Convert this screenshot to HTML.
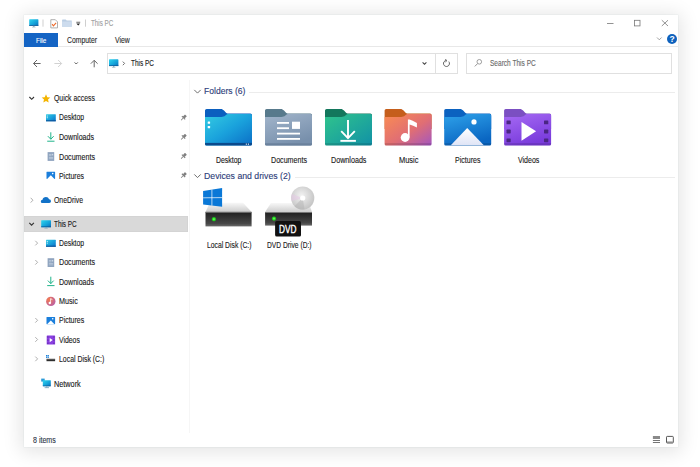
<!DOCTYPE html>
<html><head><meta charset="utf-8">
<style>
html,body{margin:0;padding:0;width:700px;height:467px;overflow:hidden;background:#fff;}
body{position:relative;font-family:"Liberation Sans",sans-serif;color:#1a1a1a;}
.win{position:absolute;left:24px;top:15px;width:654px;height:432px;background:#fff;
  box-shadow:0 2px 18px 3px rgba(0,0,0,0.11), 0 0 0 0.5px rgba(180,200,200,0.18);}
.a{position:absolute;}
.t{position:absolute;white-space:nowrap;line-height:1;transform-origin:0 0;-webkit-text-stroke:0.12px currentColor;}
</style></head><body>
<div class="win"></div>
<div class="a" style="left:24px;top:215.7px;width:164px;height:16.6px;background:#d9d9d9;box-shadow:inset 0 0 0 0.6px #d0d0d0"></div>

<svg class="a" style="left:0;top:0" width="700" height="467" viewBox="0 0 700 467">
<defs>
 <linearGradient id="gMon" x1="0" y1="0" x2="1" y2="1"><stop offset="0" stop-color="#2fd6ee"/><stop offset="0.6" stop-color="#13a0d8"/><stop offset="1" stop-color="#0a6cb8"/></linearGradient>
 <linearGradient id="gDesk" x1="0" y1="0" x2="1" y2="1"><stop offset="0" stop-color="#34cbe2"/><stop offset="0.5" stop-color="#1aa2dc"/><stop offset="1" stop-color="#0b6ec6"/></linearGradient>
 <linearGradient id="gDoc" x1="0" y1="0" x2="0.5" y2="1"><stop offset="0" stop-color="#a2b5cb"/><stop offset="1" stop-color="#7890ac"/></linearGradient>
 <linearGradient id="gDl" x1="0" y1="0" x2="1" y2="1"><stop offset="0" stop-color="#30c48c"/><stop offset="1" stop-color="#1191a6"/></linearGradient>
 <linearGradient id="gMus" x1="0" y1="0" x2="1" y2="1"><stop offset="0" stop-color="#fa8c52"/><stop offset="0.55" stop-color="#e06e74"/><stop offset="1" stop-color="#a356c0"/></linearGradient>
 <linearGradient id="gPic" x1="0" y1="0" x2="0.4" y2="1"><stop offset="0" stop-color="#2ea2ea"/><stop offset="1" stop-color="#0a66c2"/></linearGradient>
 <linearGradient id="gVid" x1="0" y1="0" x2="0.4" y2="1"><stop offset="0" stop-color="#a66af4"/><stop offset="1" stop-color="#7a3cdc"/></linearGradient>
 <linearGradient id="gMtn" x1="0" y1="0" x2="0" y2="1"><stop offset="0" stop-color="#ffffff"/><stop offset="1" stop-color="#dfe4f6"/></linearGradient>
 <linearGradient id="gTop" x1="0" y1="0" x2="0" y2="1"><stop offset="0" stop-color="#f7f7f7"/><stop offset="1" stop-color="#cdcdcd"/></linearGradient>
 <linearGradient id="gFront" x1="0" y1="0" x2="0" y2="1"><stop offset="0" stop-color="#1e1e1e"/><stop offset="0.8" stop-color="#474747"/><stop offset="1" stop-color="#6a6a6a"/></linearGradient>
 <radialGradient id="gDisc" cx="0.45" cy="0.4" r="0.6"><stop offset="0" stop-color="#f2f2f2"/><stop offset="1" stop-color="#c4c4c4"/></radialGradient>
 <radialGradient id="gMusC" cx="0.3" cy="0.3" r="0.8"><stop offset="0" stop-color="#f47a4e"/><stop offset="1" stop-color="#b860a8"/></radialGradient>
 <radialGradient id="gLed" cx="0.5" cy="0.5" r="0.5"><stop offset="0" stop-color="#7dff6a"/><stop offset="0.6" stop-color="#18d018"/><stop offset="1" stop-color="#18d018" stop-opacity="0"/></radialGradient>
 <path id="fBack" d="M0,1.6 Q0,0 1.6,0 L15.6,0 C17.2,0 18,0.5 19,1.6 L20.8,3.6 C21.6,4.4 22.2,4.6 23.4,4.6 L45.4,4.6 Q47,4.6 47,6.2 L47,20 L0,20 Z"/>
 <path id="fFront" d="M0,8 L16.4,8 C18.2,8 19.2,7.6 20.4,6.6 L21,6 C21.8,5.4 22.4,5.2 23.6,5.2 L45.4,5.2 Q47,5.2 47,6.8 L47,35 Q47,36.6 45.4,36.6 L1.6,36.6 Q0,36.6 0,35 Z"/>
 <clipPath id="cFront"><use href="#fFront"/></clipPath>
</defs>

<!-- ===== title bar ===== -->
<g transform="translate(29.2,19.2)">
 <rect x="0" y="0" width="9.2" height="6.6" rx="0.6" fill="url(#gMon)"/>
 <rect x="0" y="5.9" width="9.2" height="0.8" fill="#0a5c9c"/>
 <rect x="4" y="6.6" width="1.3" height="1.2" fill="#7f9fb2"/>
 <rect x="2.8" y="7.6" width="3.6" height="0.6" fill="#9ab3c2"/>
</g>
<rect x="42.6" y="19.5" width="0.8" height="7.2" fill="#c4c4c4"/>
<g transform="translate(50.3,19.2)">
 <path d="M0.5,0.5 L5,0.5 L7.2,2.7 L7.2,8.7 L0.5,8.7 Z" fill="#fff" stroke="#9a9a9a" stroke-width="0.8"/>
 <path d="M1.8,5 L3.1,6.6 L5.8,3.6" fill="none" stroke="#ee6a2a" stroke-width="1.1"/>
</g>
<g transform="translate(62.1,19.5)">
 <path d="M0,0.6 Q0,0 0.6,0 L3.6,0 L4.6,1 L9.6,1 L9.6,7.3 L0,7.3 Z" fill="#b9cde3"/>
 <rect x="0" y="2" width="9.6" height="5.3" fill="#cddcee"/>
</g>
<rect x="76.3" y="21.8" width="3.9" height="0.8" fill="#444"/>
<path d="M76.3,23.4 L80.2,23.4 L78.25,25.6 Z" fill="#222"/>
<rect x="85.2" y="19.5" width="0.8" height="7.2" fill="#c4c4c4"/>

<!-- window controls -->
<rect x="607" y="23" width="6.5" height="0.8" fill="#777"/>
<rect x="634.4" y="20.3" width="5.6" height="5.6" fill="none" stroke="#777" stroke-width="0.8"/>
<path d="M661.8,20.2 L668,26 M668,20.2 L661.8,26" stroke="#777" stroke-width="0.8"/>
<path d="M657,37.5 L659.3,39.8 L661.6,37.5" fill="none" stroke="#888" stroke-width="0.8"/>
<circle cx="672" cy="39" r="5" fill="#0f62bd"/>
<text x="672" y="42.2" font-family="Liberation Sans" font-weight="bold" font-size="8.5" fill="#fff" text-anchor="middle">?</text>

<!-- nav arrows -->
<path d="M33.5,63.5 L40.6,63.5 M37,60 L33.5,63.5 L37,67" fill="none" stroke="#666" stroke-width="1"/>
<path d="M54.4,63.5 L61.6,63.5 M58.1,60 L61.6,63.5 L58.1,67" fill="none" stroke="#d2d2d2" stroke-width="1"/>
<path d="M74.6,62.4 L76.2,64 L77.8,62.4" fill="none" stroke="#555" stroke-width="0.95"/>
<path d="M94.2,60.3 L94.2,67.3 M90.8,63.7 L94.2,60.3 L97.6,63.7" fill="none" stroke="#666" stroke-width="1"/>

<!-- address icons -->
<g transform="translate(109,59.3)">
 <rect x="0" y="0" width="9.4" height="6.8" rx="0.6" fill="url(#gMon)"/>
 <rect x="0" y="6" width="9.4" height="0.8" fill="#0a5c9c"/>
 <rect x="4.1" y="6.8" width="1.3" height="1.1" fill="#7f9fb2"/>
 <rect x="2.9" y="7.7" width="3.6" height="0.6" fill="#9ab3c2"/>
</g>
<path d="M122.8,61.6 L124.6,63.4 L122.8,65.2" fill="none" stroke="#666" stroke-width="0.95"/>
<path d="M422.6,62.4 L424.5,64.3 L426.4,62.4" fill="none" stroke="#444" stroke-width="1.1"/>
<path d="M448.8,61.6 A3,3 0 1 1 446.2,60.5" fill="none" stroke="#555" stroke-width="0.9"/>
<path d="M445.2,59.3 L447,60.6 L445.4,62" fill="none" stroke="#555" stroke-width="0.8"/>
<circle cx="479.3" cy="61.8" r="2.3" fill="none" stroke="#888" stroke-width="0.8"/>
<path d="M477.6,63.6 L474.8,66.4" stroke="#888" stroke-width="0.9"/>

<!-- ===== sidebar ===== -->
<path d="M29.4,97 L31.7,99.3 L34,97" fill="none" stroke="#333" stroke-width="1.15"/>
<path d="M46,94.3 L47.25,97.2 L50.3,97.4 L48,99.4 L48.7,102.5 L46,100.9 L43.3,102.5 L44,99.4 L41.7,97.4 L44.75,97.2 Z" fill="#f4b400"/>
<!-- desktop -->
<g transform="translate(46,114.3)"><rect width="9.8" height="7" rx="0.5" fill="url(#gDesk)"/><rect y="6" width="9.8" height="1" fill="#0b4f94"/><rect x="0.8" y="1.3" width="0.9" height="0.9" fill="#fff"/><rect x="0.8" y="3" width="0.9" height="0.9" fill="#fff"/></g>
<!-- downloads -->
<path d="M50.8,132.3 L50.8,139.3 M47.9,136.2 L50.8,139.2 L53.7,136.2" fill="none" stroke="#20b48a" stroke-width="1"/>
<rect x="47.2" y="140.7" width="7.3" height="1" fill="#20b48a"/>
<!-- documents -->
<g transform="translate(47.6,152.1)"><rect width="6.6" height="8.8" fill="#8fa4bf"/><rect x="1.3" y="2" width="2.5" height="0.6" fill="#c9d5e4"/><rect x="1.3" y="3.4" width="2.5" height="0.6" fill="#c9d5e4"/><rect x="4.2" y="1.8" width="1.4" height="1.5" fill="#c9d5e4"/><rect x="1.3" y="5" width="4.3" height="0.6" fill="#c9d5e4"/><rect x="1.3" y="6.4" width="4.3" height="0.6" fill="#c9d5e4"/></g>
<!-- pictures -->
<g transform="translate(46.5,171.7)"><rect width="8.6" height="7.3" rx="0.4" fill="#1b7fdc"/><path d="M0.6,7.3 L4.3,3.6 L8,7.3 Z" fill="#fff"/><circle cx="6.2" cy="1.9" r="0.8" fill="#fff"/></g>
<!-- pins -->
<g id="pin" fill="#808080" transform="translate(183.5,117.8) rotate(45)"><rect x="-1.3" y="-3.4" width="2.6" height="3.2" rx="0.3"/><rect x="-2.3" y="-0.6" width="4.6" height="1.1"/><rect x="-0.4" y="0.4" width="0.8" height="3"/></g>
<use href="#pin" y="19.3"/>
<use href="#pin" y="38.4"/>
<use href="#pin" y="57.6"/>
<!-- onedrive -->
<path d="M30.7,197.8 L32.9,200.2 L30.7,202.6" fill="none" stroke="#9a9a9a" stroke-width="0.8"/>
<path d="M42.3,202.9 Q40.8,202.9 40.8,201.4 Q40.8,199.9 42.5,199.8 Q43,197 46,197 Q48.3,197 49.1,199.3 Q51,199.4 51,201.2 Q51,202.9 49.3,202.9 Z" fill="#1272c8"/>
<!-- this pc -->
<path d="M29.3,222.9 L31.6,225.2 L33.9,222.9" fill="none" stroke="#333" stroke-width="1.15"/>
<g transform="translate(41.2,220.2)">
 <rect x="0" y="0" width="9.8" height="7" rx="0.5" fill="url(#gMon)"/>
 <rect x="0" y="6.2" width="9.8" height="0.8" fill="#0a5c9c"/>
 <rect x="4.3" y="7" width="1.3" height="1" fill="#7f9fb2"/>
 <rect x="3.1" y="7.8" width="3.6" height="0.6" fill="#9ab3c2"/>
</g>
<!-- sub chevrons -->
<g id="chev"><path d="M35.3,240.8 L37.6,243.1 L35.3,245.4" fill="none" stroke="#9a9a9a" stroke-width="0.8"/></g>
<use href="#chev" y="19.2"/>
<use href="#chev" y="77.2"/>
<use href="#chev" y="96.4"/>
<use href="#chev" y="115.8"/>
<!-- desktop sub -->
<g transform="translate(46,239.7)"><rect width="9.8" height="7" rx="0.5" fill="url(#gDesk)"/><rect y="6" width="9.8" height="1" fill="#0b4f94"/><rect x="0.8" y="1.3" width="0.9" height="0.9" fill="#fff"/><rect x="0.8" y="3" width="0.9" height="0.9" fill="#fff"/></g>
<g transform="translate(47.6,258.2)"><rect width="6.6" height="8.8" fill="#8fa4bf"/><rect x="1.3" y="2" width="2.5" height="0.6" fill="#c9d5e4"/><rect x="1.3" y="3.4" width="2.5" height="0.6" fill="#c9d5e4"/><rect x="4.2" y="1.8" width="1.4" height="1.5" fill="#c9d5e4"/><rect x="1.3" y="5" width="4.3" height="0.6" fill="#c9d5e4"/><rect x="1.3" y="6.4" width="4.3" height="0.6" fill="#c9d5e4"/></g>
<path d="M50.8,276.7 L50.8,283.7 M47.9,280.6 L50.8,283.6 L53.7,280.6" fill="none" stroke="#20b48a" stroke-width="1"/>
<rect x="47.2" y="285.1" width="7.3" height="1" fill="#20b48a"/>
<!-- music -->
<circle cx="50.8" cy="301.4" r="4.7" fill="url(#gMusC)"/>
<circle cx="49.8" cy="303" r="1.2" fill="#fff"/><path d="M50.6,303 L50.6,298.6 L52.4,299.6" fill="none" stroke="#fff" stroke-width="0.8"/>
<g transform="translate(46.5,316.9)"><rect width="8.6" height="7.3" rx="0.4" fill="#1b7fdc"/><path d="M0.6,7.3 L4.3,3.6 L8,7.3 Z" fill="#fff"/><circle cx="6.2" cy="1.9" r="0.8" fill="#fff"/></g>
<!-- videos -->
<g transform="translate(46.7,335.6)"><rect width="8.4" height="9" rx="0.4" fill="#8a3fe0"/><rect x="0.7" y="0.9" width="1" height="1" fill="#4d2590"/><rect x="0.7" y="4" width="1" height="1" fill="#4d2590"/><rect x="0.7" y="7.1" width="1" height="1" fill="#4d2590"/><rect x="6.7" y="0.9" width="1" height="1" fill="#4d2590"/><rect x="6.7" y="4" width="1" height="1" fill="#4d2590"/><rect x="6.7" y="7.1" width="1" height="1" fill="#4d2590"/><path d="M3,2.3 L6,4.5 L3,6.7 Z" fill="#fff"/></g>
<!-- local disk -->
<g transform="translate(46,355)"><rect x="0" y="0" width="1.3" height="1.3" fill="#1a7fd8"/><rect x="1.6" y="0" width="1.3" height="1.3" fill="#1a7fd8"/><rect x="0" y="1.6" width="1.3" height="1.3" fill="#1a7fd8"/><rect x="1.6" y="1.6" width="1.3" height="1.3" fill="#1a7fd8"/><rect x="0.5" y="3.9" width="8.6" height="2.3" fill="#2e2e2e"/><rect x="0.5" y="3.7" width="8.6" height="0.6" fill="#aaa"/></g>
<!-- network -->
<g transform="translate(41.2,378.6)"><rect x="0" y="0" width="3.5" height="3" fill="#2a9ad8"/><rect x="1.6" y="1.6" width="8" height="6" rx="0.4" fill="url(#gMon)"/><rect x="1.6" y="7" width="8" height="0.6" fill="#0a5c9c"/><rect x="5.1" y="7.6" width="1" height="1.2" fill="#7f9fb2"/><rect x="3.4" y="8.8" width="4.4" height="0.7" fill="#5a8fb0"/></g>

<!-- ===== content ===== -->
<path d="M194.3,89.9 L197.5,93.1 L200.7,89.9" fill="none" stroke="#666" stroke-width="0.95"/>
<path d="M194.3,174.4 L197.5,177.6 L200.7,174.4" fill="none" stroke="#666" stroke-width="0.95"/>

<!-- desktop folder -->
<g transform="translate(205,108.9)">
 <use href="#fBack" fill="#0b5fbf"/>
 <use href="#fFront" fill="url(#gDesk)"/>
 <rect x="0" y="34" width="47" height="3" fill="#0b4a8c" clip-path="url(#cFront)"/>
 <rect x="2.7" y="12.6" width="2.4" height="2.3" rx="0.5" fill="#fff"/>
 <rect x="2.7" y="17" width="2.4" height="2.3" rx="0.5" fill="#fff"/>
 <rect x="40.8" y="34.7" width="1.1" height="1.1" fill="#fff"/><rect x="42.9" y="34.7" width="1.1" height="1.1" fill="#fff"/>
</g>
<!-- documents folder -->
<g transform="translate(265,108.9)">
 <use href="#fBack" fill="#587a8c"/>
 <use href="#fFront" fill="url(#gDoc)"/>
 <rect x="0" y="34.4" width="47" height="3" fill="#6a819c" clip-path="url(#cFront)"/>
 <rect x="12" y="13.1" width="12" height="1.8" fill="#fff"/>
 <rect x="12" y="18.4" width="12" height="1.8" fill="#fff"/>
 <rect x="27" y="12.8" width="8" height="7.2" fill="#fff"/>
 <rect x="12" y="23.8" width="23" height="1.8" fill="#fff"/>
 <rect x="12" y="29.1" width="23" height="1.8" fill="#fff"/>
</g>
<!-- downloads folder -->
<g transform="translate(325,108.9)">
 <use href="#fBack" fill="#13775c"/>
 <use href="#fFront" fill="url(#gDl)"/>
 <rect x="0" y="34.2" width="47" height="3" fill="#000" opacity="0.13" clip-path="url(#cFront)"/>
 <path d="M23,11 L23,29.5 M16.2,22.3 L23,29.2 L29.8,22.3" fill="none" stroke="#fff" stroke-width="1.9"/>
 <rect x="15.4" y="31" width="15.5" height="1.9" fill="#fff"/>
</g>
<!-- music folder -->
<g transform="translate(384.6,108.9)">
 <use href="#fBack" fill="#c55e1c"/>
 <use href="#fFront" fill="url(#gMus)"/>
 <rect x="0" y="34.2" width="47" height="3" fill="#000" opacity="0.13" clip-path="url(#cFront)"/>
 <circle cx="20.5" cy="28.6" r="4.4" fill="#fff"/>
 <path d="M23.3,28.6 L23.3,10.6 L25,10.6 Q27.5,11.5 32.3,14.2 L32.3,18.6 Q28.5,16.5 25,15.6 L25,28.6 Z" fill="#fff"/>
</g>
<!-- pictures folder -->
<g transform="translate(444.2,108.9)">
 <use href="#fBack" fill="#0b62c0"/>
 <use href="#fFront" fill="url(#gPic)"/>
 <rect x="0" y="34.2" width="47" height="3" fill="#000" opacity="0.13" clip-path="url(#cFront)"/>
 <path d="M6.6,36.4 L23,19.2 L39.6,36.4 Z" fill="url(#gMtn)"/>
 <circle cx="29.8" cy="13" r="2.6" fill="#fff"/>
</g>
<!-- videos folder -->
<g transform="translate(504.1,108.9)">
 <use href="#fBack" fill="#7b4fc2"/>
 <use href="#fFront" fill="url(#gVid)"/>
 <rect x="0" y="34.2" width="47" height="3" fill="#000" opacity="0.13" clip-path="url(#cFront)"/>
 <g fill="#4a2683">
  <rect x="2.4" y="11.6" width="4.2" height="3.8" rx="0.6"/><rect x="2.4" y="20.7" width="4.2" height="3.8" rx="0.6"/><rect x="2.4" y="29.5" width="4.2" height="3.8" rx="0.6"/>
  <rect x="39.9" y="11.6" width="4.3" height="3.8" rx="0.6"/><rect x="39.9" y="20.7" width="4.3" height="3.8" rx="0.6"/><rect x="39.9" y="29.5" width="4.3" height="3.8" rx="0.6"/>
 </g>
 <path d="M17.4,13 L32,22.4 L17.4,31.8 Z" fill="#fff"/>
</g>

<!-- local disk drive -->
<g>
 <path d="M209.8,202.8 L243,202.8 L251.6,211.9 L205.5,211.9 Z" fill="url(#gTop)"/>
 <rect x="205.5" y="211.9" width="46.1" height="14.5" fill="url(#gFront)"/>
 <rect x="205.5" y="211.9" width="46.1" height="0.8" fill="#888"/>
 <circle cx="213.9" cy="219.2" r="2.6" fill="url(#gLed)"/>
 <path d="M203.1,191 L222.1,188.1 L222.1,206.8 L203.1,204.4 Z" fill="#0a78d7"/>
 <path d="M211.9,189.6 L211.9,205.7 M203.1,197.8 L222.1,197.6" stroke="#fff" stroke-width="0.7"/>
</g>
<!-- dvd drive -->
<g>
 <path d="M270.9,203.1 L308.8,203.1 L312,212.1 L265.1,212.1 Z" fill="url(#gTop)"/>
 <circle cx="302.7" cy="198" r="11.6" fill="url(#gDisc)"/>
 <path d="M302.7,198 L294.5,206.2 A11.6,11.6 0 0 0 304.5,209.5 Z" fill="#b0b0b0" opacity="0.45"/><path d="M302.7,198 L291.8,194 A11.6,11.6 0 0 0 291.5,201 Z" fill="#e6c8e6" opacity="0.5"/>
 <circle cx="302.7" cy="198" r="2.6" fill="#fff"/>
 <rect x="265.1" y="212.1" width="46.9" height="13.5" fill="url(#gFront)"/>
 <rect x="265.1" y="212.1" width="46.9" height="0.8" fill="#888"/>
 <circle cx="274" cy="218.6" r="2.6" fill="url(#gLed)"/>
 <rect x="275.1" y="221.1" width="25.9" height="15.5" rx="1.6" fill="#111"/>
</g>

<!-- status bar icons -->
<rect x="652.9" y="436" width="7.1" height="3" fill="#8a8a8a"/>
<rect x="652.9" y="440" width="7.1" height="0.9" fill="#666"/>
<rect x="652.9" y="442" width="7.1" height="0.9" fill="#666"/>
<rect x="666.5" y="436.4" width="6.8" height="6.6" rx="0.8" fill="none" stroke="#444" stroke-width="0.9"/>
<rect x="667" y="441.5" width="5.8" height="1.3" fill="#888"/>
</svg>


<!-- title bar -->

<!-- ribbon tabs -->
<div class="a" style="left:24px;top:32.6px;width:33.8px;height:14px;background:#1464c4"></div>
<div class="a" style="left:58px;top:46px;width:620px;height:1px;background:#e8e8e8"></div>

<!-- address bar -->
<div class="a" style="left:107px;top:53px;width:350.5px;height:20.8px;box-sizing:border-box;border:1px solid #e0e0e0"></div>
<div class="a" style="left:435.3px;top:53px;width:1px;height:20.8px;background:#e0e0e0"></div>
<div class="a" style="left:465.5px;top:53px;width:206.3px;height:20.6px;box-sizing:border-box;border:1px solid #e0e0e0"></div>

<!-- sidebar divider -->
<div class="a" style="left:189.2px;top:80px;width:1px;height:352.5px;background:#f6f6f6"></div>

<!-- sidebar -->

<!-- content headers -->
<div class="a" style="left:249px;top:92px;width:426px;height:1px;background:#ececec"></div>
<div class="a" style="left:295px;top:176.5px;width:380px;height:1px;background:#ececec"></div>


<!-- folder labels -->

<!-- status -->

<!--TEXT-->
<div class="t" style="left:90.60px;top:20.45px;font-size:8.2px;color:#a0a0a0;transform:scaleX(0.765);">This PC</div>
<div class="t" style="left:35.70px;top:37.17px;font-size:8.0px;color:#ffffff;transform:scaleX(0.799);">File</div>
<div class="t" style="left:67.10px;top:36.75px;font-size:8.2px;color:#2a2a2a;transform:scaleX(0.833);">Computer</div>
<div class="t" style="left:114.90px;top:36.75px;font-size:8.2px;color:#2a2a2a;transform:scaleX(0.839);">View</div>
<div class="t" style="left:131.40px;top:60.35px;font-size:8.2px;color:#1a1a1a;transform:scaleX(0.785);">This PC</div>
<div class="t" style="left:489.90px;top:60.25px;font-size:8.2px;color:#6a6a6a;transform:scaleX(0.800);">Search This PC</div>
<div class="t" style="left:54.10px;top:95.35px;font-size:8.2px;color:#1a1a1a;transform:scaleX(0.839);">Quick access</div>
<div class="t" style="left:59.00px;top:114.45px;font-size:8.2px;color:#1a1a1a;transform:scaleX(0.835);">Desktop</div>
<div class="t" style="left:59.00px;top:134.05px;font-size:8.2px;color:#1a1a1a;transform:scaleX(0.863);">Downloads</div>
<div class="t" style="left:59.00px;top:153.55px;font-size:8.2px;color:#1a1a1a;transform:scaleX(0.868);">Documents</div>
<div class="t" style="left:59.00px;top:172.55px;font-size:8.2px;color:#1a1a1a;transform:scaleX(0.844);">Pictures</div>
<div class="t" style="left:54.00px;top:197.35px;font-size:8.2px;color:#1a1a1a;transform:scaleX(0.840);">OneDrive</div>
<div class="t" style="left:54.00px;top:220.85px;font-size:8.2px;color:#1a1a1a;transform:scaleX(0.778);">This PC</div>
<div class="t" style="left:59.00px;top:240.25px;font-size:8.2px;color:#1a1a1a;transform:scaleX(0.835);">Desktop</div>
<div class="t" style="left:59.00px;top:259.35px;font-size:8.2px;color:#1a1a1a;transform:scaleX(0.868);">Documents</div>
<div class="t" style="left:59.00px;top:278.75px;font-size:8.2px;color:#1a1a1a;transform:scaleX(0.863);">Downloads</div>
<div class="t" style="left:58.90px;top:298.25px;font-size:8.2px;color:#1a1a1a;transform:scaleX(0.878);">Music</div>
<div class="t" style="left:58.90px;top:317.45px;font-size:8.2px;color:#1a1a1a;transform:scaleX(0.851);">Pictures</div>
<div class="t" style="left:58.90px;top:336.75px;font-size:8.2px;color:#1a1a1a;transform:scaleX(0.838);">Videos</div>
<div class="t" style="left:58.70px;top:356.05px;font-size:8.2px;color:#1a1a1a;transform:scaleX(0.843);">Local Disk (C:)</div>
<div class="t" style="left:54.10px;top:380.65px;font-size:8.2px;color:#1a1a1a;transform:scaleX(0.891);">Network</div>
<div class="t" style="left:203.80px;top:86.27px;font-size:9.4px;color:#2b3b78;transform:scaleX(0.915);">Folders (6)</div>
<div class="t" style="left:203.90px;top:170.87px;font-size:9.4px;color:#2b3b78;transform:scaleX(0.929);">Devices and drives (2)</div>
<div class="t" style="left:216.30px;top:157.15px;font-size:8.2px;color:#1a1a1a;transform:scaleX(0.844);">Desktop</div>
<div class="t" style="left:270.70px;top:157.15px;font-size:8.2px;color:#1a1a1a;transform:scaleX(0.868);">Documents</div>
<div class="t" style="left:331.10px;top:157.15px;font-size:8.2px;color:#1a1a1a;transform:scaleX(0.875);">Downloads</div>
<div class="t" style="left:398.50px;top:157.15px;font-size:8.2px;color:#1a1a1a;transform:scaleX(0.911);">Music</div>
<div class="t" style="left:455.30px;top:157.15px;font-size:8.2px;color:#1a1a1a;transform:scaleX(0.861);">Pictures</div>
<div class="t" style="left:517.50px;top:157.15px;font-size:8.2px;color:#1a1a1a;transform:scaleX(0.858);">Videos</div>
<div class="t" style="left:206.90px;top:242.15px;font-size:8.2px;color:#1a1a1a;transform:scaleX(0.829);">Local Disk (C:)</div>
<div class="t" style="left:266.90px;top:242.15px;font-size:8.2px;color:#1a1a1a;transform:scaleX(0.816);">DVD Drive (D:)</div>
<div class="t" style="left:32.60px;top:437.15px;font-size:8.2px;color:#2d3548;transform:scaleX(0.863);">8 items</div>
<div class="t" style="left:279.20px;top:225.35px;font-size:10.3px;color:#ffffff;transform:scaleX(0.800);-webkit-text-stroke:0.35px #fff;">DVD</div>
<!--/TEXT-->
</body></html>
